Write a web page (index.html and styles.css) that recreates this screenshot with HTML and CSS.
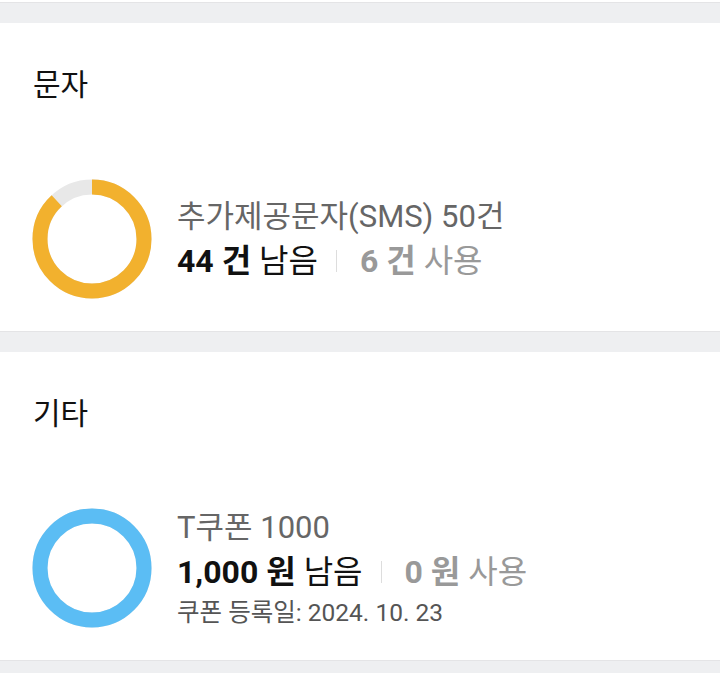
FILE: index.html
```html
<!DOCTYPE html>
<html lang="ko">
<head>
    <meta charset="UTF-8">
    <meta name="viewport" content="width=device-width, initial-scale=1.0">
    <title>잔여량</title>
    <link rel="stylesheet" href="styles.css">
</head>
<body>
    <div class="list">
        <section class="card">
            <h2 class="card-title">문자</h2>
            <div class="usage">
                <svg class="donut" viewBox="0 0 120 120" width="120" height="120">
                    <circle cx="60" cy="60" r="52" class="donut-track"></circle>
                    <circle cx="60" cy="60" r="52" class="donut-fill sms" stroke-dasharray="287.5 326.7" transform="rotate(-90 60 60)"></circle>
                </svg>
                <div class="usage-info">
                    <p class="usage-name">추가제공문자(SMS) 50건</p>
                    <p class="usage-amount">
                        <span class="left"><b>44 건</b> 남음</span>
                        <span class="sep"></span>
                        <span class="used"><b>6 건</b> 사용</span>
                    </p>
                </div>
            </div>
        </section>

        <section class="card">
            <h2 class="card-title">기타</h2>
            <div class="usage">
                <svg class="donut" viewBox="0 0 120 120" width="120" height="120">
                    <circle cx="60" cy="60" r="52" class="donut-track"></circle>
                    <circle cx="60" cy="60" r="52" class="donut-fill coupon" stroke-dasharray="326.8 326.8" transform="rotate(-90 60 60)"></circle>
                </svg>
                <div class="usage-info">
                    <p class="usage-name">T쿠폰 1000</p>
                    <p class="usage-amount">
                        <span class="left"><b>1,000 원</b> 남음</span>
                        <span class="sep"></span>
                        <span class="used"><b>0 원</b> 사용</span>
                    </p>
                    <p class="usage-date">쿠폰 등록일: 2024. 10. 23</p>
                </div>
            </div>
        </section>
    </div>
</body>
</html>
```

FILE: styles.css
```css
* {
    box-sizing: border-box;
    margin: 0;
    padding: 0;
}

html {
    background-color: #eeeff1;
}

body {
    font-family: Roboto, 'Noto Sans CJK KR', sans-serif;
    color: #111;
    background-color: #eeeff1;
    border-top: 2px solid #fff;
}

.list {
    display: flex;
    flex-direction: column;
    gap: 20px;
    padding: 20px 0;
    border-top: 1px solid #e4e4e6;
}

.card {
    background: #fff;
    height: 309px;
    padding: 42px 32px 0 32px;
    border-bottom: 1px solid #e4e4e6;
}

.card-title {
    font-size: 30px;
    font-weight: 400;
    line-height: 40px;
    padding-left: 1px;
}

.usage {
    display: flex;
    align-items: center;
    gap: 25px;
    height: 120px;
    margin-top: 74px;
}

.donut {
    flex: none;
    display: block;
}

.donut-track {
    fill: none;
    stroke: #e8e8e8;
    stroke-width: 15;
}

.donut-fill {
    fill: none;
    stroke-width: 15;
}

.donut-fill.sms { stroke: #f2b12e; }
.donut-fill.coupon { stroke: #5bbdf4; }

.usage-info {
    display: flex;
    flex-direction: column;
}

.usage-name {
    font-size: 31px;
    line-height: 44px;
    color: #666;
}

.usage-amount {
    display: flex;
    align-items: center;
    font-size: 32px;
    line-height: 45px;
}

.usage-amount b {
    font-weight: 700;
}

.sep {
    width: 1px;
    height: 22px;
    background: #ddd;
    margin: 0 23px 0 18px;
}

.used {
    color: #999;
}

.usage-date {
    font-size: 24.5px;
    line-height: 36px;
    color: #555;
}
```
